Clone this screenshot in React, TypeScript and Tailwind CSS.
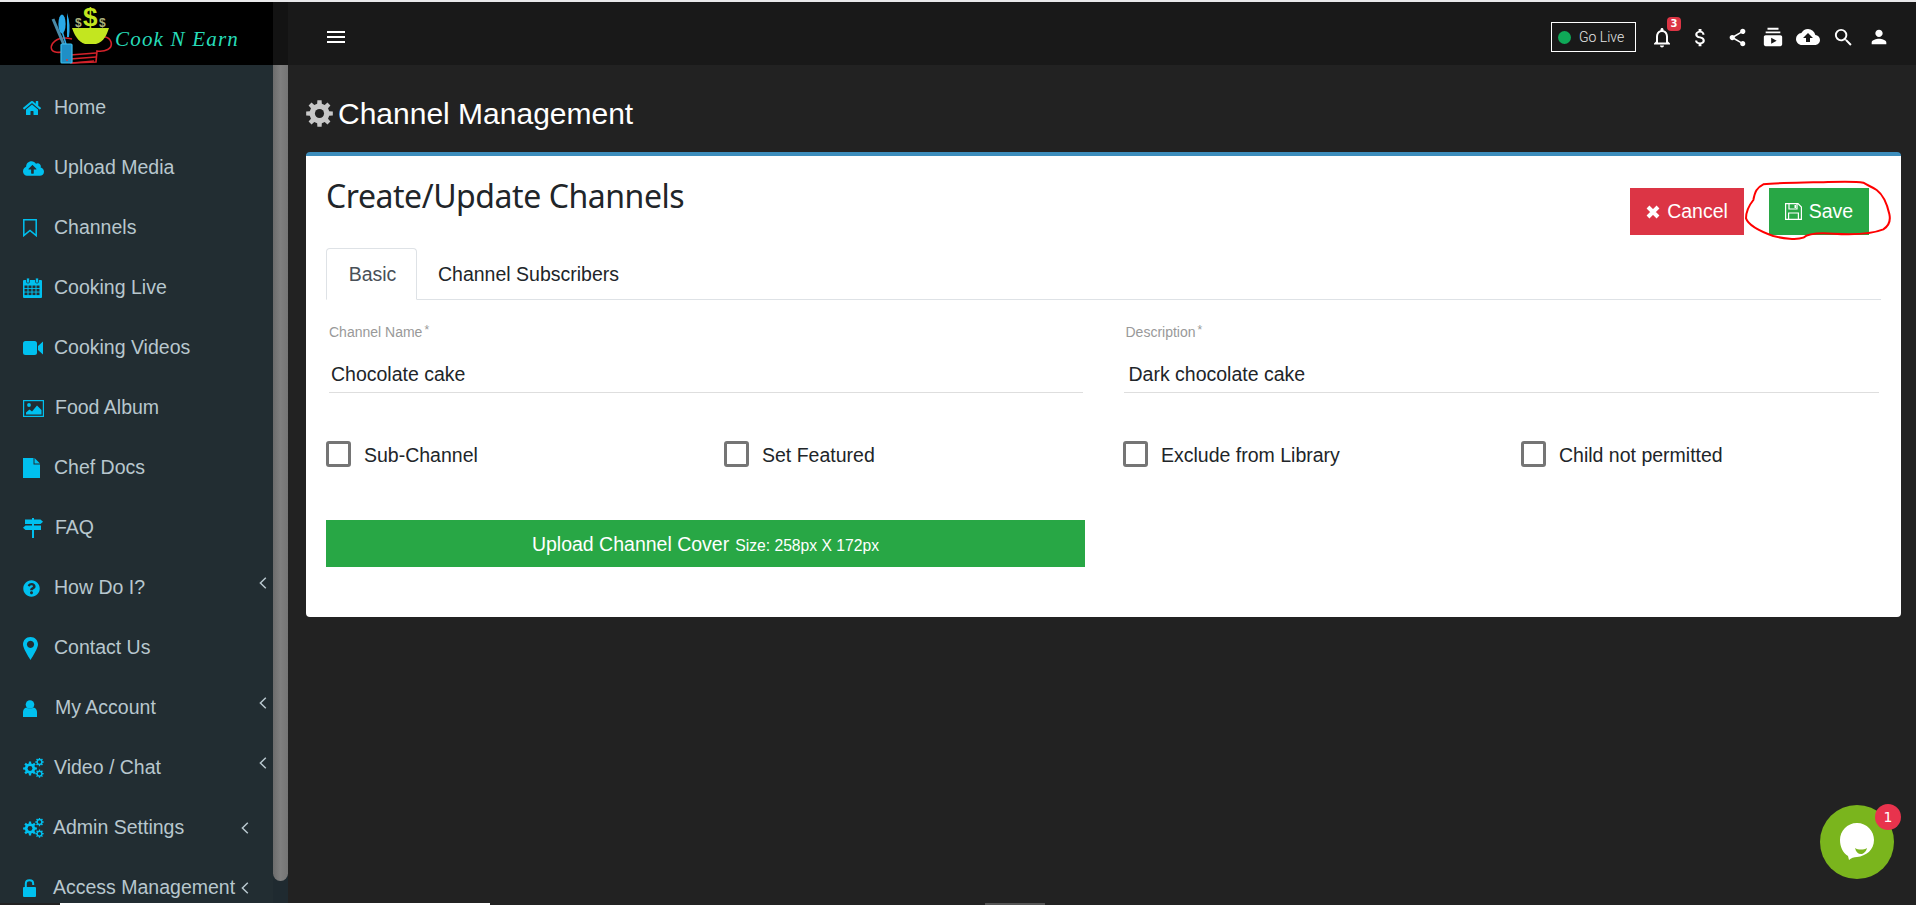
import React from "react";
import { FaHome, FaCloudUploadAlt, FaQuestionCircle } from "react-icons/fa";
import { MdMenu, MdNotificationsNone, MdAttachMoney, MdShare, MdSubscriptions, MdCloudUpload, MdSearch, MdPerson } from "react-icons/md";

const C = "#00c0ef";
const BG = "#222d32";

function gearPath(cx: number, cy: number, r: number, teeth: number) {
  const pts: string[] = [];
  const inner = r * 0.74;
  const step = (Math.PI * 2) / teeth;
  for (let i = 0; i < teeth; i++) {
    const a = i * step;
    const w = step * 0.2;
    const w2 = step * 0.3;
    const p = (rad: number, ang: number) => `${(cx + rad * Math.cos(ang)).toFixed(2)} ${(cy + rad * Math.sin(ang)).toFixed(2)}`;
    pts.push(p(inner, a - w2), p(r, a - w), p(r, a + w), p(inner, a + w2));
  }
  return "M" + pts.join(" L") + " Z";
}

function Gear({ size, color, hole }: { size: number; color: string; hole: string }) {
  return (
    <svg width={size} height={size} viewBox="0 0 26 26">
      <path d={gearPath(13, 13, 13, 8)} fill={color} />
      <circle cx="13" cy="13" r="4.4" fill={hole} />
    </svg>
  );
}

const Bookmark = () => (
  <svg width="14" height="18" viewBox="0 0 14 18"><path d="M.8.8H13.2V16.6L7 11.4.8 16.6Z" fill="none" stroke={C} strokeWidth="1.5" /></svg>
);
const Calendar = () => (
  <svg width="19" height="20" viewBox="0 0 19 20">
    <rect x="0" y="2" width="19" height="18" rx="1" fill={C} />
    <rect x="3.5" y="0" width="3" height="5" rx="1" fill={C} stroke={BG} strokeWidth=".7" />
    <rect x="12.5" y="0" width="3" height="5" rx="1" fill={C} stroke={BG} strokeWidth=".7" />
    {[7.5, 11, 14.5].map((y) =>
      [1.5, 5.5, 9.5, 13.5].map((x) => <rect key={`${x}-${y}`} x={x} y={y} width="3" height="2.6" fill={BG} />)
    )}
  </svg>
);
const Video = () => (
  <svg width="20" height="14" viewBox="0 0 20 14">
    <rect x="0" y="0" width="14" height="14" rx="2.5" fill={C} />
    <path d="M15 5 L20 .5 V13.5 L15 9Z" fill={C} />
  </svg>
);
const ImageIcon = () => (
  <svg width="21" height="17" viewBox="0 0 21 17">
    <rect x=".6" y=".6" width="19.8" height="15.8" fill="none" stroke={C} strokeWidth="1.2" />
    <circle cx="6" cy="5" r="1.9" fill={C} />
    <path d="M3 14.5 V12.5 L6.5 9.5 L9 11.5 L14 5.5 L18.5 10 V14.5Z" fill={C} />
  </svg>
);
const FileIcon = () => (
  <svg width="17" height="20" viewBox="0 0 17 20">
    <path d="M0 0H10.5V6.5H17V20H0Z" fill={C} />
    <path d="M11.5 0 L17 5.5 H11.5Z" fill={C} />
  </svg>
);
const Signs = () => (
  <svg width="20" height="20" viewBox="0 0 20 20">
    <rect x="9" y="0" width="2" height="20" fill={C} />
    <path d="M2 1.5H17.5L20 3.7 17.5 6H2Z" fill={C} />
    <path d="M2.5 7.5H18V12H2.5L0 9.7Z" fill={C} />
  </svg>
);
const Marker = () => (
  <svg width="15" height="23" viewBox="0 0 15 23">
    <path fillRule="evenodd" d="M7.5 0C12 0 15 3.5 15 7.5 15 11 10 19 7.5 23 5 19 0 11 0 7.5 0 3.5 3 0 7.5 0ZM7.5 3.8a3.6 3.6 0 1 0 .01 0Z" fill={C} />
  </svg>
);
const UserIcon = () => (
  <svg width="14" height="17" viewBox="0 0 14 17">
    <circle cx="7" cy="4.5" r="4.3" fill={C} />
    <path d="M0 17V12C0 10 1.5 8 3.5 7.6 5 9 9 9 10.5 7.6 12.5 8 14 10 14 12V17Z" fill={C} />
  </svg>
);
const Cogs = () => (
  <svg width="21" height="20" viewBox="0 0 21 20">
    <path d={gearPath(7, 10.5, 7, 8)} fill={C} />
    <circle cx="7" cy="10.5" r="2.4" fill={BG} />
    <path d={gearPath(16.5, 4, 4.2, 8)} fill={C} />
    <circle cx="16.5" cy="4" r="1.7" fill={BG} />
    <path d={gearPath(16.5, 15.7, 4.2, 8)} fill={C} />
    <circle cx="16.5" cy="15.7" r="1.7" fill={BG} />
  </svg>
);
const Unlock = () => (
  <svg width="13" height="18" viewBox="0 0 13 18">
    <rect x="0" y="8" width="13" height="10" rx="1" fill={C} />
    <path d="M2.8 8.5V4.8C2.8.2 10.2.2 10.2 4.8V6" fill="none" stroke={C} strokeWidth="2" />
  </svg>
);
const Chevron = () => (
  <svg width="8" height="12" viewBox="0 0 8 12"><path d="M6.8.8 1.4 6 6.8 11.2" fill="none" stroke="#b8c7ce" strokeWidth="1.5" /></svg>
);

type Item = { icon: React.ReactNode; label: string; x: number; chev?: number; up?: boolean };

const nav: Item[] = [
  { icon: <FaHome size={18} color={C} />, label: "Home", x: 54 },
  { icon: <FaCloudUploadAlt size={21} color={C} />, label: "Upload Media", x: 54 },
  { icon: <Bookmark />, label: "Channels", x: 54 },
  { icon: <Calendar />, label: "Cooking Live", x: 54 },
  { icon: <Video />, label: "Cooking Videos", x: 54 },
  { icon: <ImageIcon />, label: "Food Album", x: 55 },
  { icon: <FileIcon />, label: "Chef Docs", x: 54 },
  { icon: <Signs />, label: "FAQ", x: 55 },
  { icon: <FaQuestionCircle size={17} color={C} />, label: "How Do I?", x: 54, chev: 263, up: true },
  { icon: <Marker />, label: "Contact Us", x: 54 },
  { icon: <UserIcon />, label: "My Account", x: 55, chev: 263, up: true },
  { icon: <Cogs />, label: "Video / Chat", x: 54, chev: 263, up: true },
  { icon: <Cogs />, label: "Admin Settings", x: 53, chev: 245 },
  { icon: <Unlock />, label: "Access Management", x: 53, chev: 245 },
];

function Logo() {
  return (
    <svg width="68" height="62" viewBox="0 0 68 62" className="shrink-0">
      <path d="M22 36 C6 32 -1 42 2 47 C5 51 14 49 18 48 L21 60 L46 59 L47 48 C55 49 63 46 61 39 C59 33 52 33 48 35" fill="none" stroke="#d3222a" strokeWidth="1.6" />
      <path d="M20 52 L46 50 M20 56 L46 54 M22 60 L44 58" stroke="#d3222a" strokeWidth="1.3" fill="none" />
      <path d="M22 25 L59 25 C57 31 54 39 46 41 L35 41 C28 39 24 31 22 25 Z" fill="#c3e61f" />
      <text x="33" y="23" fontSize="26" fontWeight="700" fill="#c3e61f" fontFamily="Liberation Sans, sans-serif">$</text>
      <text x="25" y="24" fontSize="12" fontWeight="700" fill="#aab07a" fontFamily="Liberation Sans, sans-serif">$</text>
      <text x="49" y="24" fontSize="12" fontWeight="700" fill="#aab07a" fontFamily="Liberation Sans, sans-serif">$</text>
      <ellipse cx="12" cy="21" rx="3.6" ry="9.5" fill="#29a9e8" />
      <path d="M12 28 L18 48" stroke="#29a9e8" strokeWidth="1.5" />
      <path d="M3 16 L14 42" stroke="#4a8aa8" strokeWidth="3" />
      <path d="M17 10 C20 18 20 26 19 34 L17 34 Z" fill="#29a9e8" />
      <rect x="11" y="41" width="11" height="19" rx="1" fill="#1f8fc6" stroke="#3cc0f0" strokeWidth="1.2" />
      <circle cx="17" cy="57" r="0.9" fill="#e33" />
    </svg>
  );
}

function Sidebar() {
  return (
    <div className="flex w-[288px] shrink-0 flex-col">
      <div className="flex h-[63px] shrink-0 items-stretch bg-[#131313]">
        <div className="flex w-[273px] items-center bg-black pl-[50px]">
          <Logo />
          <span className="-ml-[3px] mt-[12px] text-[21px] italic tracking-[1.2px] text-[#27dcb9] [font-family:'Liberation_Serif',serif]">Cook N Earn</span>
        </div>
      </div>
      <div className="flex h-[838px] min-h-0 bg-[#222d32]">
        <div className="w-[273px] overflow-hidden pt-[13px]">
          {nav.map(({ icon, label, x, chev, up }) => (
            <div key={label} className="flex h-[60px] items-center justify-between text-[19.5px] text-[#b8c7ce]">
              <div className="flex items-center whitespace-nowrap pl-[23px]">
                <div className="flex shrink-0 items-center" style={{ width: x - 23 }}>
                  {icon}
                </div>
                <span>{label}</span>
              </div>
              {chev ? (
                <div className={up ? "-mt-[11px] shrink-0" : "shrink-0"} style={{ marginRight: 273 - chev - 4 }}>
                  <Chevron />
                </div>
              ) : null}
            </div>
          ))}
        </div>
        <div className="flex w-[15px] flex-col bg-[#1f2a30]">
          <div className="h-[816px] rounded-b-[8px] bg-gradient-to-r from-[#6c6c6c] via-[#7f7f7f] to-[#757575]" />
        </div>
      </div>
    </div>
  );
}

function Header() {
  return (
    <div className="flex h-[63px] shrink-0 items-center bg-[#191919] pl-[37px] pt-[7px]">
      <MdMenu size={24} className="-ml-[1px] text-white" />
      <div className="ml-auto flex items-center">
        <div className="flex h-[30px] w-[85px] items-center border border-white pl-[6px] text-[14px] font-light text-[#e6e6e6] [font-family:Roboto,sans-serif]">
          <span className="mr-[8px] h-[13px] w-[13px] rounded-full bg-[#0fa958]" />
          Go Live
        </div>
        <div className="relative ml-[14px] flex w-[24px] justify-center">
          <MdNotificationsNone size={25} className="text-white" />
          <span className="absolute left-[17px] -top-[8px] flex h-[14px] w-[14px] items-center justify-center rounded-[4px] bg-[#dc3545] text-[10px] font-bold text-white [font-family:'DejaVu_Sans',sans-serif]">3</span>
        </div>
        <MdAttachMoney size={23} className="ml-[15px] text-white" />
        <MdShare size={21} className="ml-[15px] text-white" />
        <MdSubscriptions size={22} className="ml-[14px] text-white" />
        <MdCloudUpload size={24} className="ml-[12px] text-white" />
        <MdSearch size={23} className="ml-[12px] text-white" />
        <MdPerson size={22} className="ml-[13px] mr-[26px] text-white" />
      </div>
    </div>
  );
}

function Field({ label, value, pad, valuePad }: { label: string; value: string; pad: number; valuePad: number }) {
  return (
    <div>
      <div className="flex h-[16px] items-start text-[14px] leading-[16px] text-[#999]" style={{ paddingLeft: pad }}>
        {label}<span className="ml-[2px] -mt-[2px] text-[12px]">*</span>
      </div>
      <div className="mt-[13px] h-[40px] border-b border-[#dedede] pt-[9px] text-[19.5px] leading-[24px] text-[#212529]" style={{ paddingLeft: valuePad }}>
        {value}
      </div>
    </div>
  );
}

function Check({ label }: { label: string }) {
  return (
    <div className="flex h-[26px] items-center">
      <span className="h-[26px] w-[25px] shrink-0 rounded-[3px] border-[3px] border-[#757575]" />
      <span className="ml-[13px] mt-[4px] text-[19.5px] text-[#212529]">{label}</span>
    </div>
  );
}

function Card() {
  return (
    <div className="mx-[15px] h-[465px] rounded-[4px] border-t-4 border-[#3c8dbc] bg-white px-[20px]">
      <div className="flex items-start justify-between pr-[12px]">
        <h2 className="mt-[18px] text-[32px] leading-[44px] tracking-[-0.45px] text-[#212529] [font-family:'Noto_Sans',sans-serif]">Create/Update Channels</h2>
        <div className="mt-[32px] flex gap-[25px] text-[19.5px] text-white">
          <div className="flex h-[47px] w-[114px] items-center justify-center bg-[#dc3545]">
            <svg width="14" height="14" viewBox="0 0 14 14" className="mr-[7px]"><path d="M2 2 12 12M12 2 2 12" stroke="#fff" strokeWidth="4" /></svg>
            Cancel
          </div>
          <div className="flex h-[47px] w-[100px] items-center justify-center bg-[#28a745]">
            <svg width="17" height="17" viewBox="0 0 17 17" className="mr-[7px]">
              <path d="M.6.6H13L16.4 4V16.4H.6Z" fill="none" stroke="#fff" strokeWidth="1.2" />
              <path d="M4 1V6H12V1M3.6 16V10H13.4V16" fill="none" stroke="#fff" strokeWidth="1.2" />
              <rect x="9.5" y="2" width="1.5" height="3" fill="#fff" />
            </svg>
            Save
          </div>
        </div>
      </div>
      <div className="mt-[13px] flex h-[52px] border-b border-[#dee2e6] text-[19.5px]">
        <div className="flex h-[52px] w-[91px] items-center justify-center rounded-t-[4px] border border-[#dee2e6] border-b-white bg-white pl-[2px] pt-[2px] text-[#495057]">Basic</div>
        <div className="flex items-center pl-[21px] pt-[2px] text-[#212529]">Channel Subscribers</div>
      </div>
      <div className="mt-[24px] grid grid-cols-2 gap-x-[40px]">
        <div className="pl-[3px] pr-[1px]"><Field label="Channel Name" value="Chocolate cake" pad={0} valuePad={2} /></div>
        <div className="pr-[2px]"><Field label="Description" value="Dark chocolate cake" pad={2} valuePad={5} /></div>
      </div>
      <div className="mt-[48px] grid grid-cols-[398px_399px_398px_1fr]">
        <Check label="Sub-Channel" />
        <Check label="Set Featured" />
        <Check label="Exclude from Library" />
        <Check label="Child not permitted" />
      </div>
      <div className="mt-[53px] flex h-[47px] w-[759px] items-baseline justify-center bg-[#28a745] pt-[10px] text-white">
        <span className="text-[19.5px]">Upload Channel Cover</span>
        <span className="ml-[6px] text-[15.7px] font-light">Size: 258px X 172px</span>
      </div>
    </div>
  );
}

export default function App() {
  return (
    <div className="relative flex h-[905px] w-[1916px] flex-col overflow-hidden bg-[#222222] [font-family:'Liberation_Sans',Arial,sans-serif]">
      <div className="h-[2px] shrink-0 bg-[#e8e8ea]" />
      <div className="flex h-[901px] shrink-0">
        <Sidebar />
        <div className="min-w-0 flex-1">
          <Header />
          <div className="flex h-[87px] items-center pl-[18px] pt-[9px] text-[30px] text-white">
            <span className="mr-[5px]"><Gear size={27} color="#c8c8c8" hole="#222222" /></span>
            Channel Management
          </div>
          <div className="pl-[3px]">
            <Card />
          </div>
        </div>
      </div>
      <div className="flex h-[2px] shrink-0">
        <div className="ml-[60px] w-[430px] bg-white" />
        <div className="ml-[495px] w-[60px] bg-[#555]" />
      </div>

      <svg className="pointer-events-none absolute left-[1600px] top-[140px]" width="316" height="170" viewBox="0 0 948 510">
        <path d="M790 128 C760 122 700 126 640 127 C590 128 530 128 490 133 C470 143 465 155 460 180 C448 195 438 212 438 235 C445 255 470 270 520 288 C550 296 590 300 610 293 C625 280 660 278 700 281 C750 284 810 284 850 268 C866 258 872 240 868 222 C862 195 850 165 830 150 C815 140 800 135 790 128 Z" fill="none" stroke="#f00" strokeWidth="6" />
      </svg>

      <div className="absolute left-[1820px] top-[805px] flex h-[74px] w-[74px] items-center justify-center rounded-full bg-[#7ab51d]">
        <svg width="40" height="42" viewBox="0 0 40 42">
          <path d="M20 2 C30 2 37 10 37 19 C37 29 29 35 20 36 C17 36 14 37 12 39 L11 35 C6 32 3 26 3 19 C3 10 10 2 20 2 Z" fill="#fff" />
          <path d="M18 27 C21 29 27 29 30 27 C29 31 26 33 24 33 C21 33 19 31 18 27 Z" fill="#7ab51d" />
        </svg>
      </div>
      <div className="absolute left-[1875px] top-[804px] flex h-[26px] w-[26px] items-center justify-center rounded-full bg-[#e8334d] text-[14px] text-white [font-family:'DejaVu_Sans',sans-serif]">1</div>
    </div>
  );
}
